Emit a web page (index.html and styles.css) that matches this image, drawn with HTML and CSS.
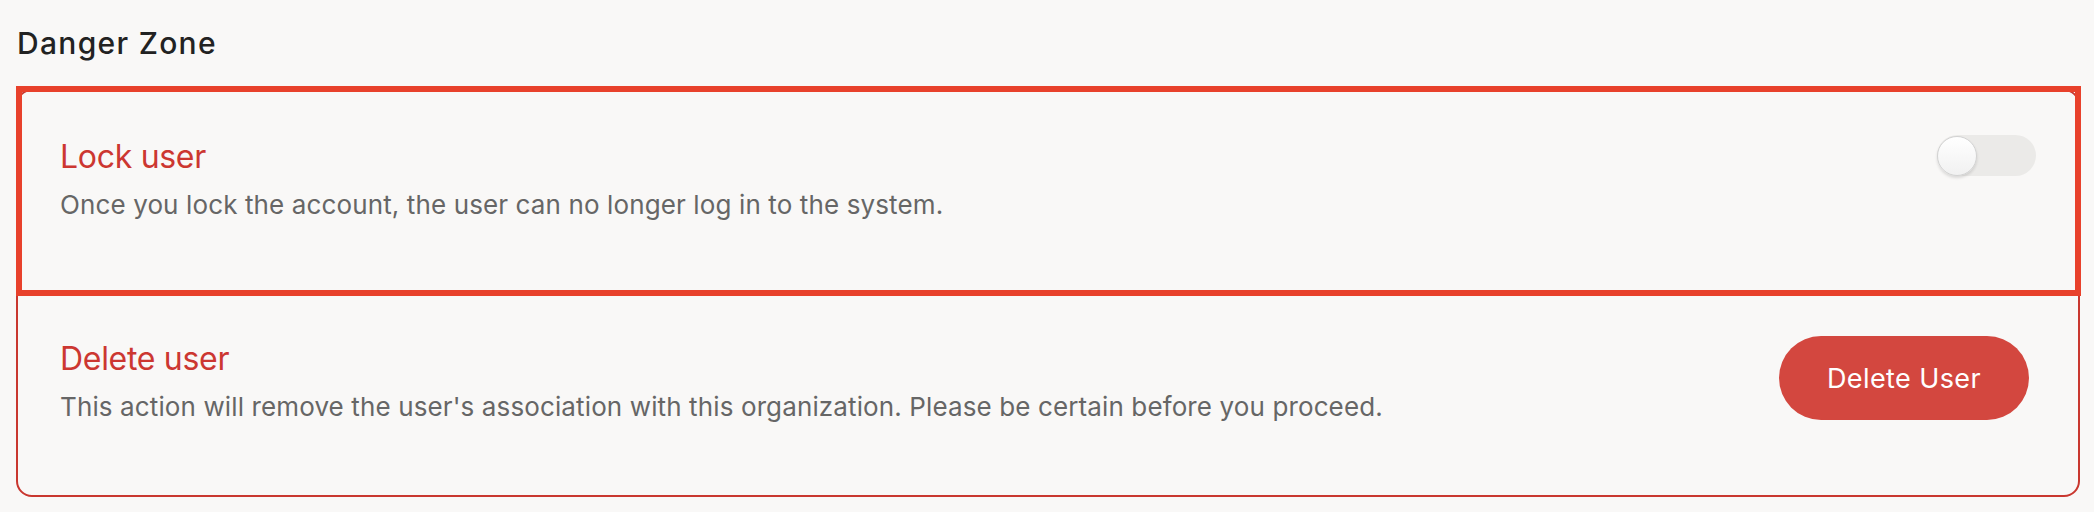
FILE: index.html
```html
<!DOCTYPE html>
<html lang="en">
<head>
<meta charset="utf-8">
<title>Danger Zone</title>
<link rel="stylesheet" href="styles.css">
</head>
<body>
<div class="page">
  <h2 class="heading">Danger Zone</h2>
  <div class="card">
    <div class="row row-lock">
      <div class="text">
        <div class="title">Lock user</div>
        <div class="desc">Once you lock the account, the user can no longer log in to the system.</div>
      </div>
      <div class="toggle"><span class="knob"></span></div>
      <div class="highlight"></div>
    </div>
    <div class="row row-delete">
      <div class="text">
        <div class="title">Delete user</div>
        <div class="desc">This action will remove the user's association with this organization. Please be certain before you proceed.</div>
      </div>
      <button class="btn-danger">Delete User</button>
    </div>
  </div>
</div>
</body>
</html>
```

FILE: styles.css
```css
html, body {
  margin: 0;
  padding: 0;
  background: #f9f8f7;
}
body {
  font-family: Inter, "Noto Sans", sans-serif;
}
.page {
  padding: 23px 14px 0 16px;
}
.heading {
  margin: 0 0 26px 1px;
  font-size: 30px;
  line-height: 40px;
  font-weight: 500;
  letter-spacing: 1.3px;
  color: #222;
}
.card {
  border: 2px solid #c9372f;
  border-radius: 16px;
}
.row {
  position: relative;
  display: flex;
  justify-content: space-between;
  align-items: flex-start;
  padding: 46px 42px 70px 42px;
}
.row-lock {
  height: 86px;
}
.text {
  display: flex;
  flex-direction: column;
  gap: 10px;
}
.title {
  font-size: 32px;
  line-height: 40px;
  letter-spacing: -0.3px;
  color: #cc3731;
}
.desc {
  font-size: 26px;
  line-height: 36px;
  letter-spacing: 0.12px;
  color: #666;
}
.toggle {
  margin-top: -2px;
  width: 99px;
  height: 41px;
  border-radius: 21px;
  background: #ebeae8;
  display: flex;
  align-items: center;
}
.knob {
  width: 38px;
  height: 38px;
  border-radius: 50%;
  background: linear-gradient(#ffffff, #f1f1f1);
  border: 1px solid #d2d2d2;
  box-shadow: 0 2px 3px rgba(0,0,0,0.12);
}
.highlight {
  position: absolute;
  left: -2px;
  right: -3px;
  top: -5px;
  bottom: -3px;
  border: 6px solid #e8412b;
  pointer-events: none;
}
.btn-danger {
  margin-top: -3px;
  margin-right: 7px;
  width: 250px;
  height: 84px;
  border: none;
  border-radius: 42px;
  background: #d3473f;
  color: #fff;
  font-family: Inter, "Noto Sans", sans-serif;
  font-size: 27px;
  letter-spacing: 0.4px;
}
```
